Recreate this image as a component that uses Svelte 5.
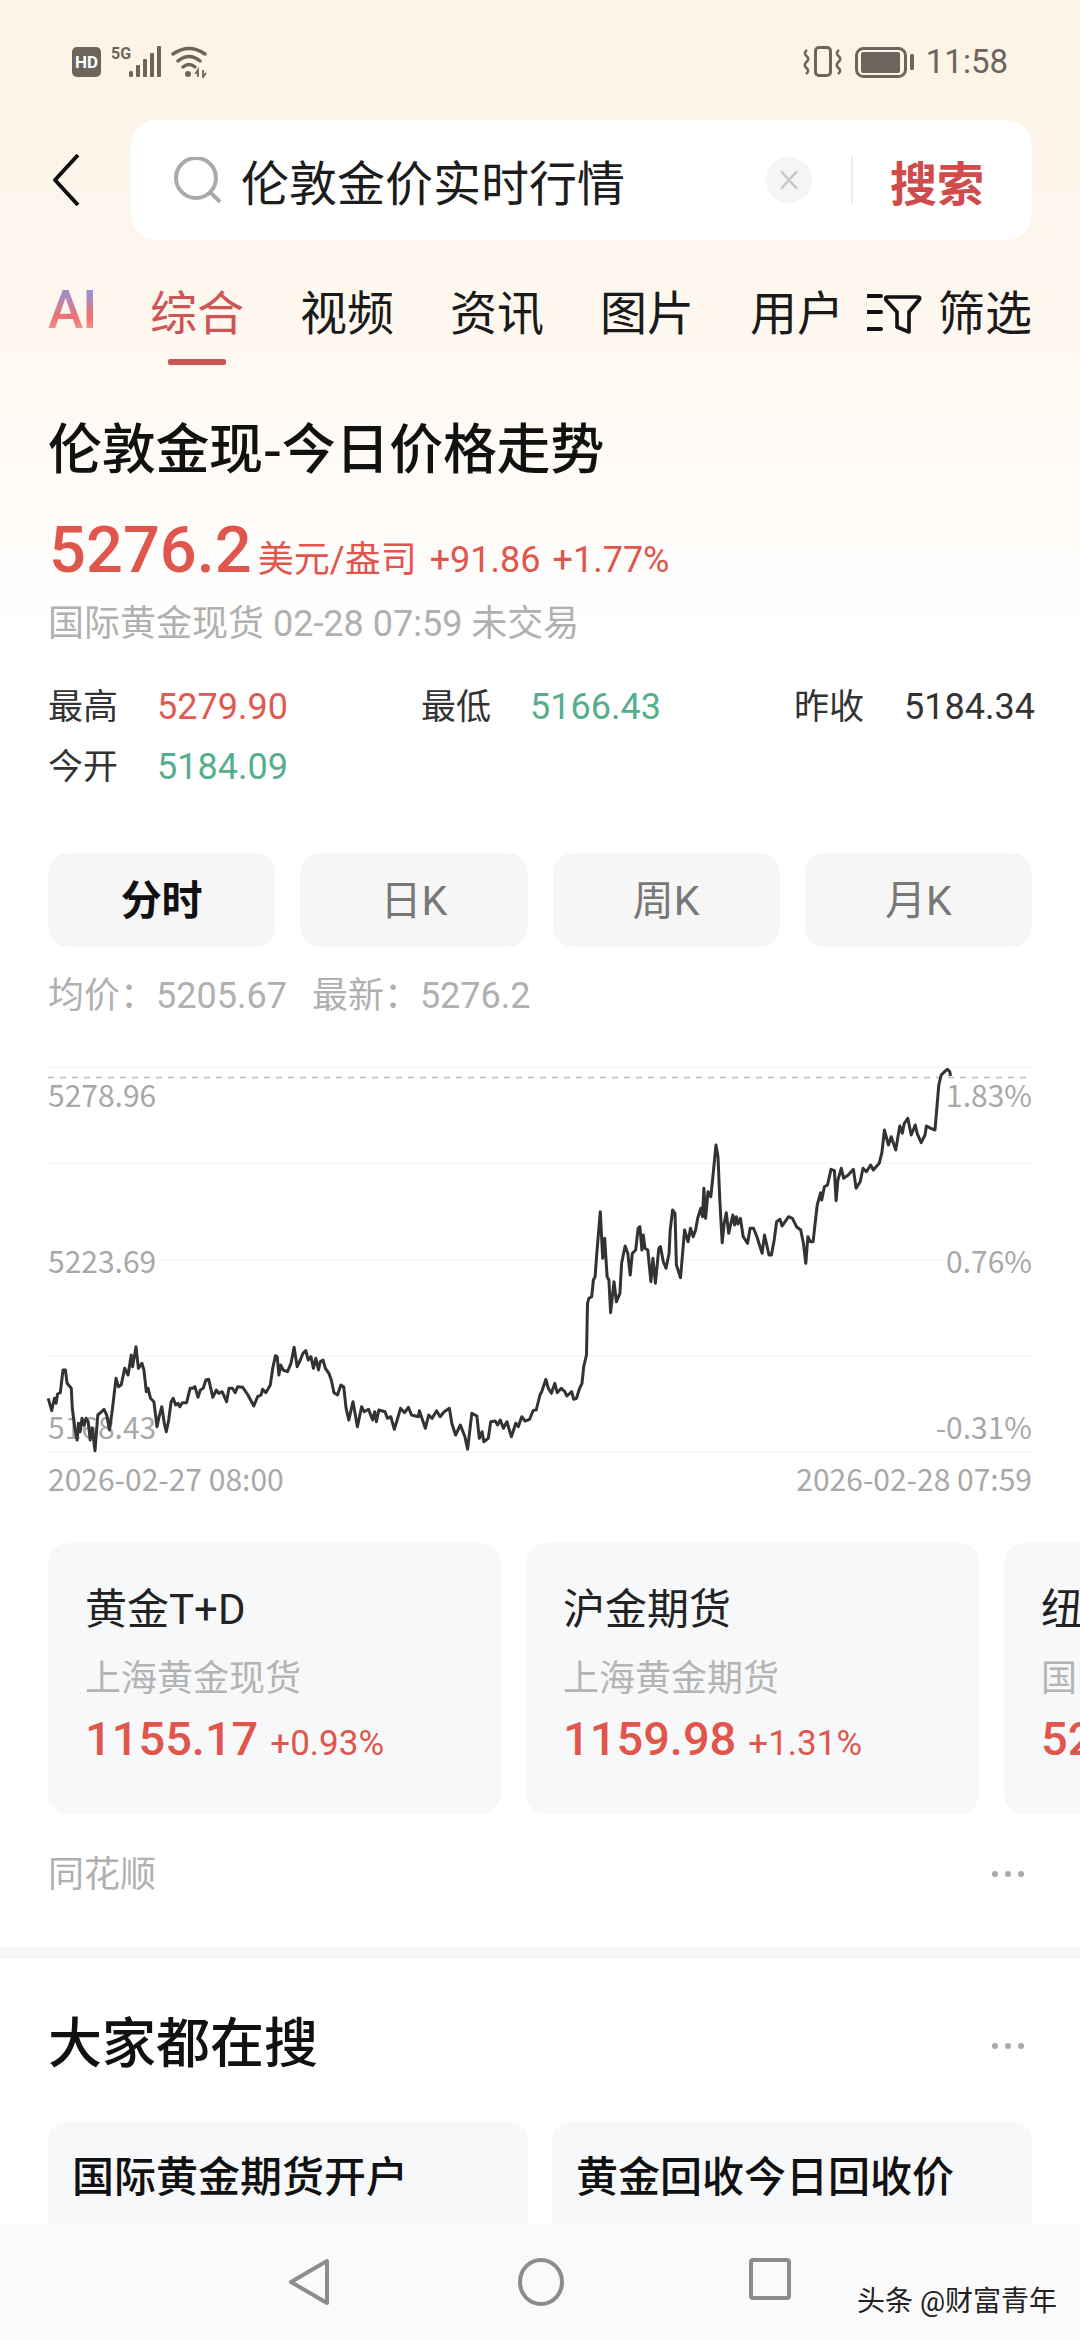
<script lang="ts">
  // traced from the intraday chart, in crop units: x / 2.904, y / 3
  const left = [[140,1075],[150,1112],[158,1075],[163,1090],[167,1062],[175,1058],[183,990],[190,990],[195,1030],[207,1045],[210,1105],[218,1170],[224,1200],[228,1150],[233,1175],[238,1135],[244,1155],[250,1135],[256,1145],[262,1200],[268,1165],[276,1232],[284,1125],[295,1115],[302,1108],[310,1125],[318,1170],[326,1110],[337,1015],[344,1040],[352,1035],[362,985],[372,1005],[381,945],[385,980],[395,920],[402,985],[412,970],[418,990],[425,1055],[430,1045],[437,1075],[447,1085],[456,1160],[462,1130],[470,1100],[477,1150],[483,1175],[490,1140],[497,1085],[503,1075],[510,1095],[517,1090],[522,1100],[530,1088],[542,1088],[552,1045],[560,1045],[566,1040],[575,1072],[582,1050],[590,1045],[598,1020],[606,1018],[618,1072],[628,1050],[635,1060],[645,1055],[658,1085],[665,1045],[675,1045],[683,1058],[690,1040],[705,1042],[720,1065],[737,1098],[748,1070],[758,1065],[763,1048],[772,1058],[785,1035],[792,985],[800,947],[805,950],[810,1005],[815,975],[822,990],[835,995],[845,970],[854,922],[863,980],[872,960],[880,940],[888,932],[895,960],[903,950],[910,985],[917,955],[925,990],[930,965],[938,960],[945,985],[955,1000],[962,1020],[970,1058],[980,1065],[990,1035],[998,1040],[1005,1105],[1013,1140],[1025,1085],[1038,1160],[1050,1100],[1058,1115],[1070,1108],[1082,1140],[1088,1115],[1093,1145],[1100,1110],[1118,1115],[1125,1135],[1135,1130],[1145,1168],[1155,1135],[1163,1105],[1175,1118],[1186,1102],[1195,1125],[1215,1130],[1218,1112],[1235,1165],[1245,1125],[1255,1135],[1268,1112],[1278,1130],[1290,1115],[1305,1105],[1312,1150],[1323,1185],[1337,1155],[1350,1190],[1358,1228],[1370,1120],[1385,1128],[1392,1195],[1400,1175],[1405,1205],[1418,1195],[1425,1145],[1438,1143],[1445,1155],[1453,1140],[1462,1165],[1472,1145],[1485,1190],[1498,1150],[1505,1160],[1515,1130],[1525,1143],[1538,1138],[1548,1112],[1558,1108]];
  const right = [[-11,1110],[0,1065],[5,1055],[17,1018],[24,1045],[33,1060],[43,1030],[50,1058],[62,1045],[72,1055],[78,1068],[92,1055],[98,1078],[106,1075],[115,1045],[122,1030],[127,980],[135,945],[138,790],[142,775],[150,770],[155,720],[160,710],[165,640],[175,515],[182,655],[188,595],[195,710],[200,720],[205,818],[215,725],[222,785],[232,760],[237,670],[247,618],[255,640],[262,705],[268,640],[278,630],[285,565],[290,560],[296,630],[300,585],[305,625],[313,630],[322,725],[328,655],[335,730],[345,625],[350,620],[358,665],[366,685],[375,640],[378,570],[385,510],[392,520],[396,675],[408,713],[420,570],[430,605],[437,565],[445,590],[452,570],[458,535],[467,505],[472,530],[476,445],[481,535],[488,455],[496,470],[503,400],[511,315],[517,350],[522,480],[529,608],[535,550],[541,518],[548,580],[560,525],[565,555],[570,530],[575,552],[582,535],[590,590],[603,610],[610,565],[620,565],[630,590],[645,640],[652,585],[665,645],[672,645],[680,600],[687,545],[697,538],[703,558],[722,530],[733,535],[745,560],[757,570],[765,610],[772,670],[778,590],[785,605],[793,605],[805,495],[815,458],[818,480],[826,440],[835,435],[845,388],[855,392],[860,482],[865,420],[875,385],[882,415],[895,405],[910,388],[918,445],[930,425],[938,385],[948,395],[960,375],[968,390],[985,370],[993,338],[1000,270],[1012,315],[1020,290],[1033,330],[1045,258],[1052,280],[1058,250],[1068,235],[1078,285],[1090,255],[1095,280],[1107,308],[1118,285],[1122,258],[1135,265],[1147,270],[1158,135],[1165,105],[1175,95],[1183,88],[1190,95],[1192,108]];

  const toPage = (pts: number[][], base: number) =>
    pts.map(([x, y]) => `${(base + x / 2.904).toFixed(1)},${(1040 + y / 3).toFixed(1)}`).join(' ');
  const line = toPage(left, 0) + ' ' + toPage(right, 540);

  const navTabs = ['综合', '视频', '资讯', '图片', '用户'];
  const periods = ['分时', '日K', '周K', '月K'];
  const gridY = [1067, 1163, 1260, 1356, 1452];

  const quotes = [
    { name: '黄金T+D', sub: '上海黄金现货', price: '1155.17', pct: '+0.93%' },
    { name: '沪金期货', sub: '上海黄金期货', price: '1159.98', pct: '+1.31%' },
    { name: '纽约黄金', sub: '国际黄金期货', price: '5286.00', pct: '+1.80%' },
  ];
</script>

<div class="page">
  <div class="status">
    <svg class="st-left" width="136" height="32" viewBox="0 0 136 32">
      <rect x="0" y="1" width="29" height="30" rx="5" fill="#6b655c" />
      <text x="14.5" y="22" text-anchor="middle" class="hd">HD</text>
      <text x="39" y="13" class="fiveg">5G</text>
      <rect x="57" y="25" width="4" height="6" rx="1.5" fill="#6b655c" />
      <rect x="64" y="19" width="4" height="12" rx="1" fill="#6b655c" />
      <rect x="71" y="13" width="4" height="18" rx="1" fill="#6b655c" />
      <rect x="78" y="7" width="4" height="24" rx="1" fill="#6b655c" />
      <rect x="85" y="0" width="4" height="31" rx="1" fill="#6b655c" />
      <path d="M101 8 Q117 -3 133 8 M106 15 Q117 6 128 15 M111 21 Q117 16 123 21" fill="none" stroke="#6b655c" stroke-width="3.4" stroke-linecap="round" />
      <circle cx="116" cy="28" r="3" fill="#6b655c" />
      <path d="M126 31 V24 L123.5 28 M131 24 V31 L134 27" fill="none" stroke="#6b655c" stroke-width="1.8" />
    </svg>
    <div class="st-right">
      <svg width="112" height="32" viewBox="0 0 112 32">
        <rect x="13.5" y="1.5" width="15" height="28" rx="3.5" fill="none" stroke="#6b655c" stroke-width="3" />
        <path d="M5 4 Q1 7 4.5 10 Q8 13 4.5 16 Q1 19 4.5 22 Q8 25 4 28 M37 4 Q33 7 36.5 10 Q40 13 36.5 16 Q33 19 36.5 22 Q40 25 36 28" fill="none" stroke="#6b655c" stroke-width="2.6" />
        <rect x="54.5" y="2.5" width="49" height="28" rx="7" fill="none" stroke="#6b655c" stroke-width="3" />
        <rect x="59" y="6" width="39" height="21" rx="2" fill="#6b655c" />
        <rect x="108" y="8" width="4" height="16" rx="1.5" fill="#6b655c" />
      </svg>
      <span class="time">11:58</span>
    </div>
  </div>

  <div class="search-row">
    <svg class="back" width="28" height="54" viewBox="0 0 28 54">
      <path d="M26 2 L3 27 L26 52" fill="none" stroke="#111" stroke-width="4" stroke-linejoin="round" />
    </svg>
    <div class="search-box">
      <svg width="48" height="46" viewBox="0 0 48 46">
        <circle cx="22" cy="21" r="20" fill="none" stroke="#aaa" stroke-width="4" />
        <path d="M36 35 L46 45" stroke="#aaa" stroke-width="4" />
      </svg>
      <span class="query">伦敦金价实时行情</span>
      <span class="clear">
        <svg width="20" height="22" viewBox="0 0 20 22">
          <path d="M2 2 L18 20 M18 2 L2 20" stroke="#c8c8c8" stroke-width="2.6" />
        </svg>
      </span>
      <span class="divider"></span>
      <span class="go">搜索</span>
    </div>
  </div>

  <div class="tabs">
    <span class="ai">AI</span>
    {#each navTabs as t, i}
      <span class="tab" class:on={i === 0}>{t}</span>
    {/each}
    <svg class="funnel" width="56" height="42" viewBox="0 0 56 42">
      <path d="M1 3 H14 M1 19 H14 M1 36 H14" stroke="#111" stroke-width="4" stroke-linecap="round" />
      <path d="M20 4 H51 Q54 4 52 7 L42 19 V39 L30 34 V19 L19 7 Q18 4 20 4 Z" fill="none" stroke="#111" stroke-width="3.6" stroke-linejoin="round" />
    </svg>
    <span class="tab filter">筛选</span>
  </div>

  <h1 class="title">伦敦金现-今日价格走势</h1>
  <div class="price-row">
    <span class="price">5276.2</span>
    <span class="unit">美元/盎司</span>
    <span class="chg">+91.86</span>
    <span class="chg">+1.77%</span>
  </div>
  <div class="sub">国际黄金现货 02-28 07:59 未交易</div>

  <div class="stats">
    <div class="stat"><span class="k">最高</span><span class="v red">5279.90</span></div>
    <div class="stat"><span class="k">最低</span><span class="v green">5166.43</span></div>
    <div class="stat"><span class="k">昨收</span><span class="v">5184.34</span></div>
    <div class="stat"><span class="k">今开</span><span class="v green">5184.09</span></div>
  </div>

  <div class="periods">
    {#each periods as p, i}
      <div class="period" class:on={i === 0}>{p}</div>
    {/each}
  </div>

  <div class="avg"><span>均价：5205.67</span><span>最新：5276.2</span></div>

  <svg class="chart" width="1080" height="460" viewBox="0 1040 1080 460">
    {#each gridY as y}
      <line x1="48" x2="1032" y1={y} y2={y} class="grid" />
    {/each}
    <line x1="48" x2="1032" y1="1077.5" y2="1077.5" class="dash" />
    <text x="48" y="1107" class="lbl">5278.96</text>
    <rect x="48" y="1255" width="110" height="16" fill="#fff" />
    <text x="48" y="1273" class="lbl">5223.69</text>
    <text x="48" y="1439" class="lbl">5168.43</text>
    <text x="1032" y="1107" class="lbl end">1.83%</text>
    <rect x="944" y="1255" width="90" height="16" fill="#fff" />
    <text x="1032" y="1273" class="lbl end">0.76%</text>
    <text x="1032" y="1439" class="lbl end">-0.31%</text>
    <text x="48" y="1491" class="lbl">2026-02-27 08:00</text>
    <text x="1032" y="1491" class="lbl end">2026-02-28 07:59</text>
    <polyline points={line} class="trace" />
  </svg>

  <div class="quotes">
    {#each quotes as q}
      <div class="quote">
        <div class="q-name">{q.name}</div>
        <div class="q-sub">{q.sub}</div>
        <div class="q-val"><span class="q-price">{q.price}</span><span class="q-pct">{q.pct}</span></div>
      </div>
    {/each}
  </div>

  <div class="source">
    <span>同花顺</span>
    <span class="dots"><i></i><i></i><i></i></span>
  </div>

  <div class="sep"></div>

  <div class="heading">
    <span>大家都在搜</span>
    <span class="dots"><i></i><i></i><i></i></span>
  </div>

  <div class="suggest">
    <div class="sg">国际黄金期货开户</div>
    <div class="sg">黄金回收今日回收价</div>
  </div>

  <div class="navbar">
    <svg width="42" height="48" viewBox="0 0 42 48">
      <path d="M39 3 V45 L3 24 Z" fill="none" stroke="#8c8c8c" stroke-width="4" stroke-linejoin="round" />
    </svg>
    <svg width="46" height="48" viewBox="0 0 46 48">
      <ellipse cx="23" cy="24" rx="21" ry="22" fill="none" stroke="#8c8c8c" stroke-width="4" />
    </svg>
    <svg class="square" width="42" height="42" viewBox="0 0 42 42">
      <rect x="2" y="2" width="38" height="38" rx="2" fill="none" stroke="#8c8c8c" stroke-width="4" />
    </svg>
  </div>
  <div class="mark">头条 @财富青年</div>
</div>

<style>
  :global(body) {
    margin: 0;
    background: #fff;
  }
  .page {
    position: relative;
    width: 1080px;
    height: 2340px;
    overflow: hidden;
    background: linear-gradient(#fdf3e6 0, #fef7ee 300px, #fffdfb 560px, #fff 660px);
    font-family: Roboto, "Noto Sans CJK SC", sans-serif;
    color: #111;
  }
  svg { display: block; flex: none; }

  .status {
    height: 120px;
    display: flex;
    justify-content: space-between;
    align-items: flex-start;
    padding: 46px 72px 0;
    box-sizing: border-box;
  }
  .hd { fill: #fff; font: 700 17px Roboto, sans-serif; }
  .fiveg { fill: #6b655c; font: 700 16px Roboto, sans-serif; }
  .st-right { display: flex; align-items: center; gap: 12px; }
  .time { font-size: 33px; line-height: 32px; color: #6b655c; }

  .search-row {
    height: 120px;
    display: flex;
    align-items: center;
    padding: 0 48px 0 52px;
    gap: 51px;
  }
  .search-box {
    flex: 1;
    height: 120px;
    background: #fff;
    border-radius: 26px;
    display: flex;
    align-items: center;
    padding-left: 43px;
  }
  .query { margin-left: 19px; width: 525px; font-size: 48px; color: #1c1c1c; font-family: "Noto Sans CJK SC", sans-serif; }
  .clear {
    width: 46px;
    height: 46px;
    border-radius: 50%;
    background: #f5f5f5;
    display: flex;
    align-items: center;
    justify-content: center;
  }
  .divider { width: 2px; height: 48px; background: #ececec; margin: 0 37px 0 39px; }
  .go { font-size: 47px; font-weight: 700; color: #cf4c4c; font-family: "Noto Sans CJK SC", sans-serif; }

  .tabs {
    height: 126px;
    box-sizing: border-box;
    padding: 39px 0 0 48px;
    display: flex;
    align-items: flex-start;
    gap: 56px;
    font-family: "Noto Sans CJK SC", sans-serif;
  }
  .tab { position: relative; font-size: 47px; line-height: 62px; color: #1a1a1a; }
  .tab.on { color: #cd5555; }
  .tab.on::after {
    content: "";
    position: absolute;
    left: 18px;
    right: 18px;
    top: 80px;
    height: 6px;
    border-radius: 2px;
    background: #c95555;
  }
  .ai {
    width: 48px;
    margin-right: -2px;
    font: 500 53px/62px Roboto, sans-serif;
    letter-spacing: -1px;
    background: linear-gradient(#8f95e0 14%, #ee7272 62%, #f29a96 85%);
    -webkit-background-clip: text;
    background-clip: text;
    color: transparent;
  }
  .funnel { margin: 14px 0 0 -33px; }
  .filter { margin-left: -41px; }

  .title {
    margin: 40px 0 0 48px;
    height: 80px;
    font: 500 54px/80px "Noto Sans CJK SC", sans-serif;
    letter-spacing: -0.3px;
    color: #111;
  }
  .price-row {
    margin: 24px 0 0 50px;
    height: 80px;
    display: flex;
    align-items: baseline;
    color: #e0564c;
    line-height: 80px;
  }
  .price { font-size: 65px; font-weight: 500; margin-left: -1px; }
  .unit { font-size: 36px; margin: 0 13px 0 6px; }
  .chg { font-size: 36px; margin-right: 12px; }
  .sub {
    margin: 9px 0 0 48px;
    height: 50px;
    font-size: 36px;
    line-height: 50px;
    color: #b0b0b0;
  }

  .stats {
    margin: 28px 48px 0;
    display: grid;
    grid-template-columns: 373px 373px 1fr;
    grid-auto-rows: 60px;
    align-items: center;
  }
  .stat { display: flex; align-items: center; height: 60px; font-size: 36px; line-height: 60px; justify-content: flex-start; }
  .stat:nth-child(3) { justify-content: flex-end; }
  .k { width: 109px; color: #333; font-family: "Noto Sans CJK SC", sans-serif; font-size: 35px; line-height: 54px; height: 60px; }
  .stat:nth-child(3) .k { width: 110px; }
  .v { color: #333; }
  .red { color: #df5a50; }
  .green { color: #55ae8c; }

  .periods {
    margin: 56px 48px 0;
    display: grid;
    grid-template-columns: repeat(4, 1fr);
    gap: 25px;
  }
  .period {
    height: 94px;
    box-sizing: border-box;
    padding-bottom: 6px;
    border-radius: 20px;
    background: #f6f6f6;
    display: flex;
    align-items: center;
    justify-content: center;
    font-size: 41px;
    color: #777;
  }
  .period.on { color: #111; font-weight: 700; }

  .avg {
    margin: 24px 0 0 48px;
    height: 50px;
    display: flex;
    gap: 25px;
    font-size: 36px;
    line-height: 50px;
    color: #b0b0b0;
  }

  .chart { margin-top: 19px; }
  .grid { stroke: #f8f8f8; stroke-width: 2; }
  .dash { stroke: #bdbdbd; stroke-width: 1.5; stroke-dasharray: 6 6; }
  .lbl { fill: #a8a8a8; font: 400 30px "Noto Sans CJK SC", sans-serif; }
  .end { text-anchor: end; }
  .trace { fill: none; stroke: #333; stroke-width: 3; stroke-linejoin: round; }

  .quotes {
    margin: 43px 0 0 48px;
    display: flex;
    gap: 25px;
    overflow: hidden;
  }
  .quote {
    flex: none;
    width: 453px;
    height: 271px;
    box-sizing: border-box;
    padding: 39px 0 0 37px;
    border-radius: 20px;
    background: #f7f8fa;
  }
  .q-name { font-size: 42px; line-height: 56px; color: #222; }
  .q-sub { margin-top: 16px; font-size: 36px; line-height: 50px; color: #b4b4b4; }
  .q-val { margin-top: 5px; line-height: 60px; display: flex; align-items: baseline; gap: 12px; color: #e0564c; }
  .q-price { font-size: 47px; font-weight: 500; }
  .q-pct { font-size: 35px; }

  .source {
    margin: 27px 56px 0 48px;
    height: 60px;
    display: flex;
    align-items: center;
    justify-content: space-between;
    font-size: 36px;
    color: #b0b0b0;
  }
  .source .dots { margin-top: 6px; }
  .dots { display: flex; gap: 7px; }
  .dots i { width: 6px; height: 6px; border-radius: 50%; background: #aaa; }

  .sep { margin-top: 46px; height: 12px; background: #f6f6f6; }

  .heading {
    margin: 40px 56px 0 48px;
    height: 80px;
    display: flex;
    align-items: center;
    justify-content: space-between;
    font: 500 54px "Noto Sans CJK SC", sans-serif;
  }
  .heading .dots { margin-top: 14px; }

  .suggest {
    margin: 42px 48px 0;
    display: grid;
    grid-template-columns: 1fr 1fr;
    gap: 24px;
  }
  .sg {
    height: 200px;
    box-sizing: border-box;
    padding: 22px 24px 0;
    border-radius: 20px;
    background: #f7f8fa;
    font: 500 42px/62px "Noto Sans CJK SC", sans-serif;
    color: #111;
  }

  .navbar {
    position: absolute;
    left: 0;
    right: 0;
    bottom: 0;
    height: 117px;
    box-sizing: border-box;
    background: #fafafa;
    display: flex;
    align-items: flex-start;
    padding: 35px 0 0 288px;
    gap: 188px;
  }
  .square { margin-left: -3px; }
  .mark {
    position: absolute;
    left: 857px;
    top: 2282px;
    font-size: 28px;
    line-height: 40px;
    color: #222;
    white-space: nowrap;
  }
</style>
